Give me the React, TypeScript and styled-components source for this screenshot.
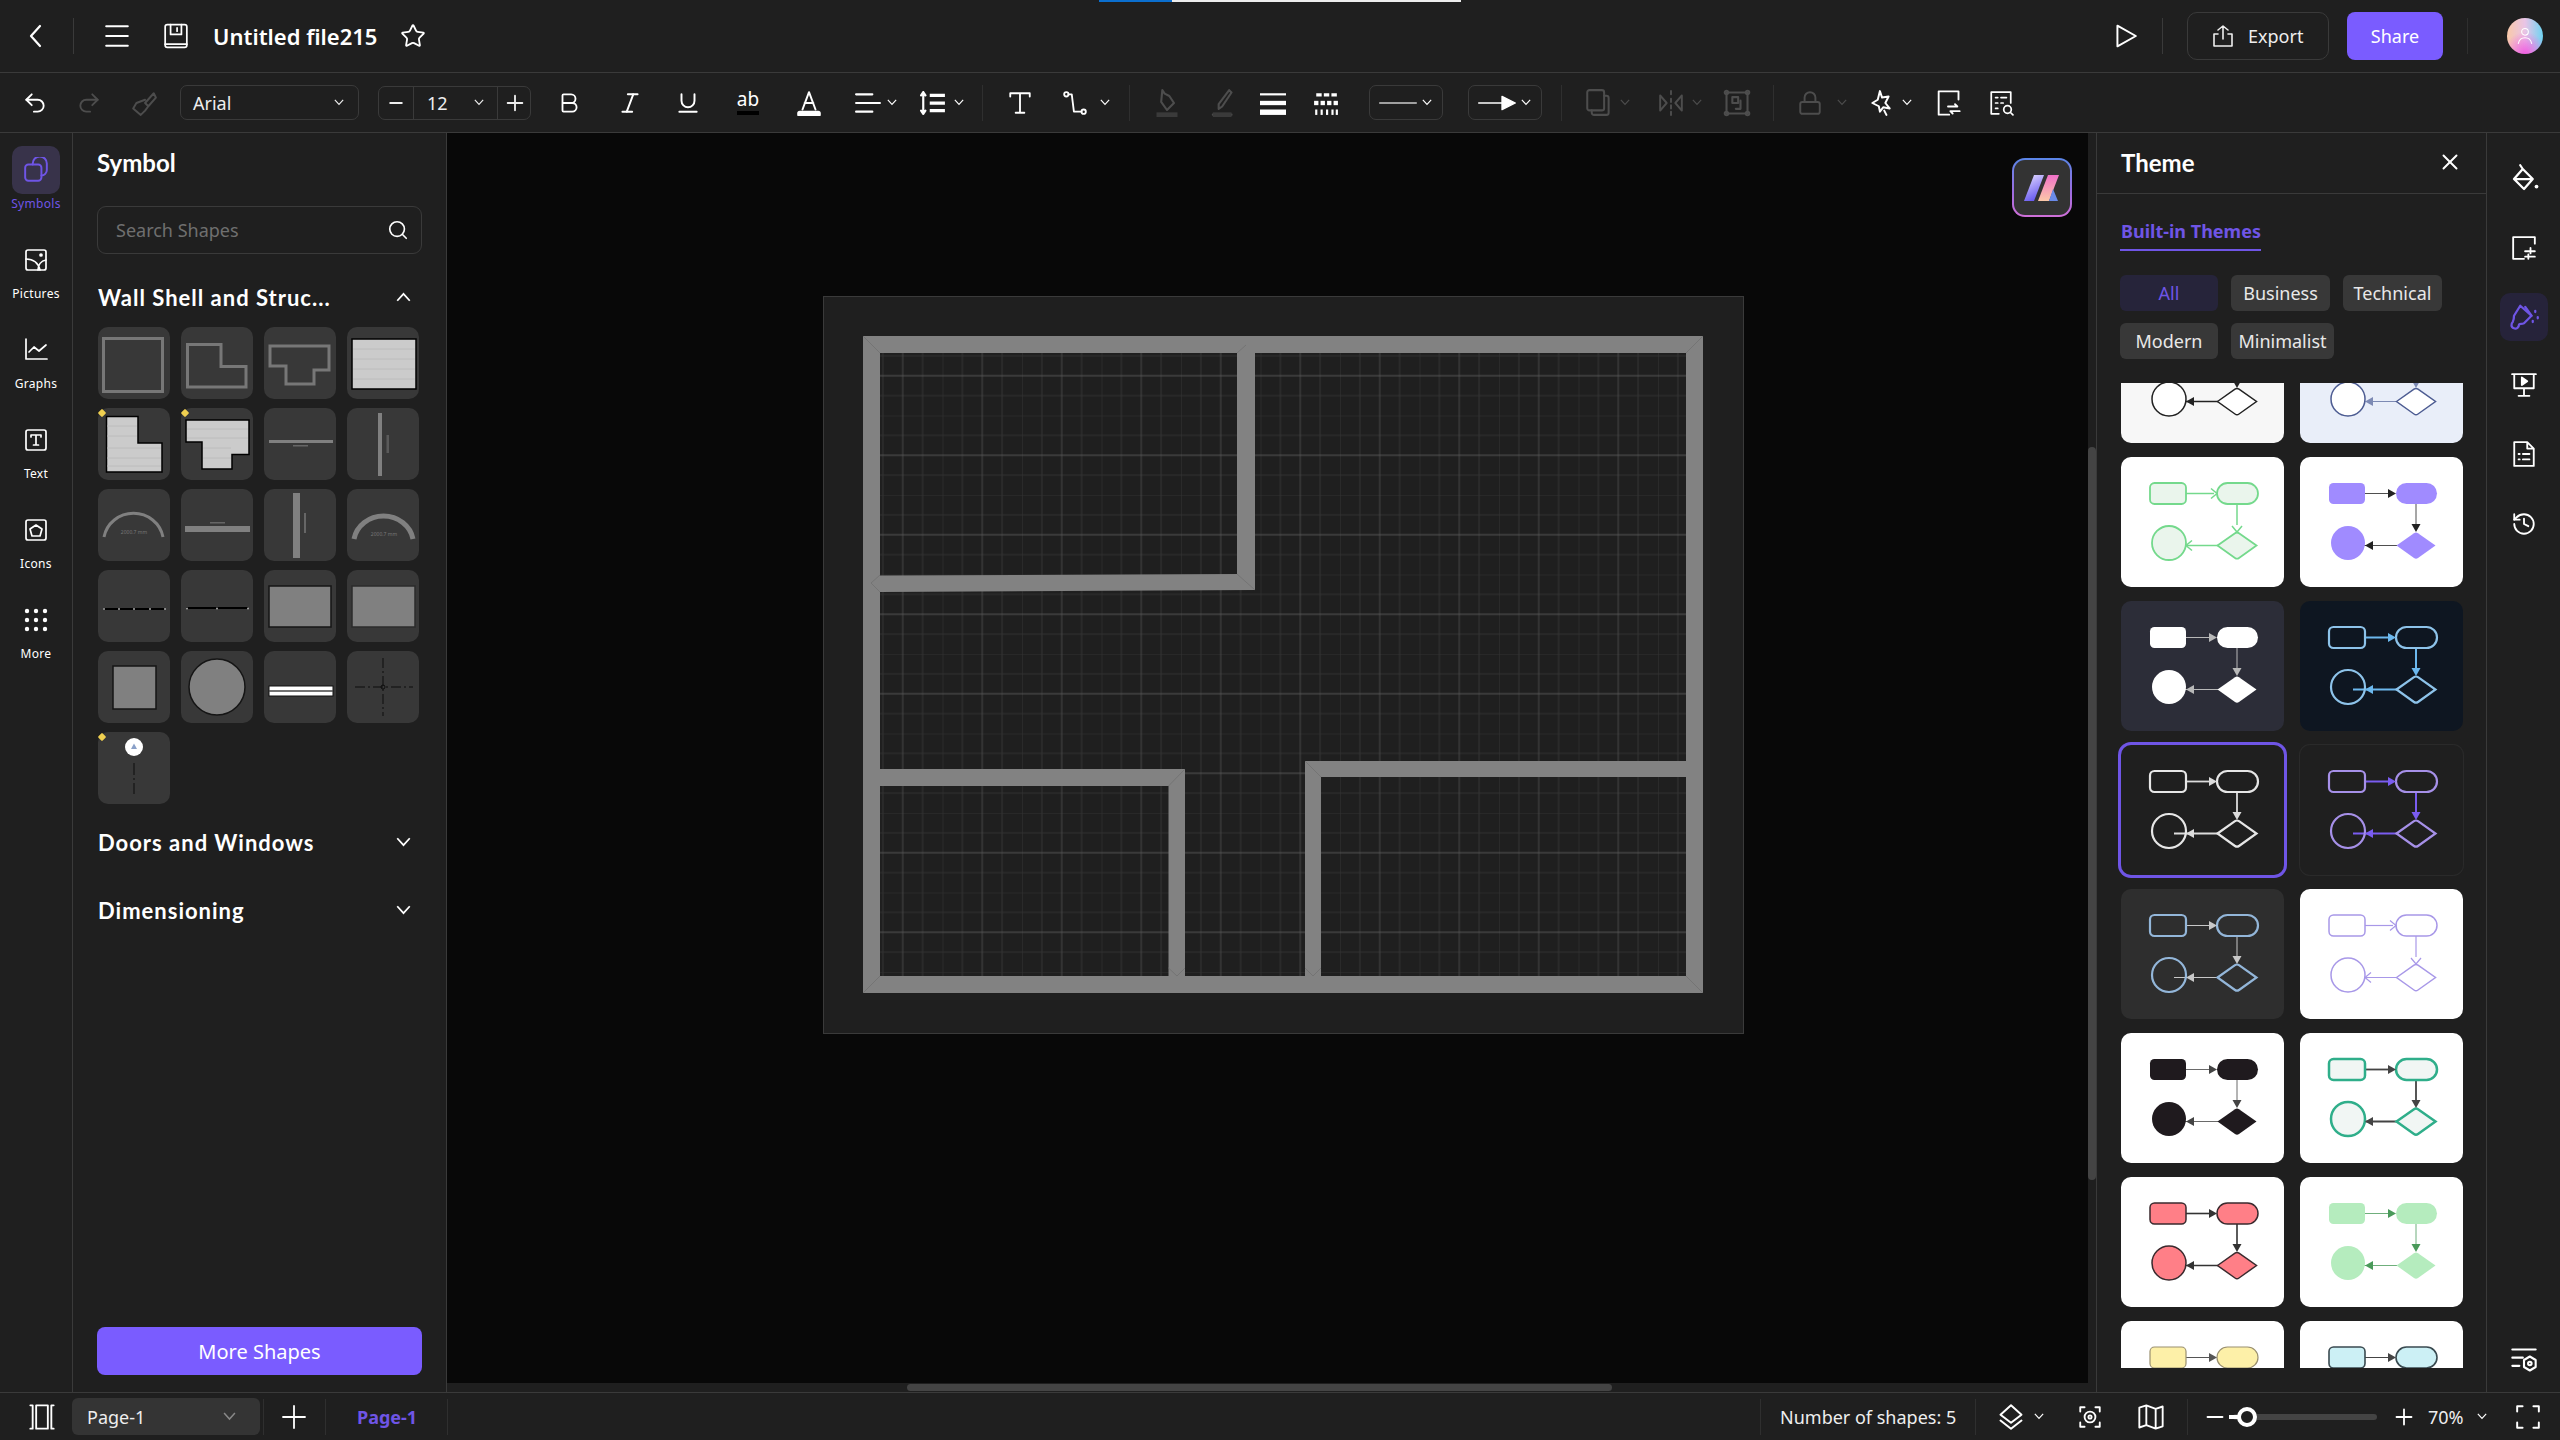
import React from 'react';
import styled, { createGlobalStyle } from 'styled-components';
import { Bold, History, Italic, Lock, Redo2, Search, Star, Underline, Undo2, X } from 'lucide-react';

const GlobalStyle = createGlobalStyle`
  html, body { margin: 0; padding: 0; background: #1f1f1f; }
  * { box-sizing: border-box; }
  body { font-family: "Noto Sans", "Liberation Sans", sans-serif; color: #fff; }
`;

const LINE = '#3a3a3a';
const PURPLE = '#7a5cff';
const INK = '#6f55e6';

const Icon = styled.svg.attrs<{ $s?: number; $sw?: number }>((p) => ({
  viewBox: '0 0 24 24',
  fill: 'none',
  stroke: 'currentColor',
  strokeWidth: p.$sw ?? 1.8,
  strokeLinecap: 'round',
  strokeLinejoin: 'round',
}))<{ $s?: number; $sw?: number }>`
  width: ${(p) => p.$s ?? 26}px;
  height: ${(p) => p.$s ?? 26}px;
  flex: none;
  display: block;
`;

const ChevSvg = styled.svg.attrs({ viewBox: '0 0 12 8', fill: 'none', stroke: 'currentColor', strokeWidth: 1.4 })<{ $w: number }>`
  width: ${(p) => p.$w}px;
  height: ${(p) => p.$w * 0.67}px;
  flex: none;
  display: block;
`;
const Chev = ({ w = 10, up = false }: { w?: number; up?: boolean }) => (
  <ChevSvg $w={w}>
    <polyline points={up ? '1,7 6,1.5 11,7' : '1,1 6,6.5 11,1'} />
  </ChevSvg>
);

const App = styled.div`
  width: 2560px;
  height: 1440px;
  display: flex;
  flex-direction: column;
  background: #1f1f1f;
  overflow: hidden;
`;

/* ---------- title bar ---------- */
const TitleBar = styled.header`
  height: 73px;
  flex: none;
  display: flex;
  align-items: center;
  border-bottom: 1px solid ${LINE};
  position: relative;
`;
const Progress = styled.div`
  position: absolute;
  top: 0;
  left: 1099px;
  width: 362px;
  height: 2px;
  background: linear-gradient(90deg, #0b6fcf 0 73px, #ececec 73px);
`;
const BarItem = styled.div<{ $ml?: number; $w?: number }>`
  margin-left: ${(p) => p.$ml ?? 0}px;
  width: ${(p) => (p.$w ? `${p.$w}px` : 'auto')};
  flex: none;
  display: flex;
  align-items: center;
  justify-content: center;
  color: #fff;
`;
const LayerItem = styled(BarItem)`
  justify-content: space-between;
`;
const VLine = styled.div<{ $ml: number; $h?: number; $soft?: boolean }>`
  margin-left: ${(p) => p.$ml}px;
  width: 1px;
  height: ${(p) => p.$h ?? 36}px;
  flex: none;
  background: ${(p) => (p.$soft ? '#2f2f2f' : LINE)};
`;
const FileName = styled.div`
  margin-left: 24px;
  width: 164px;
  flex: none;
  font-size: 22px;
  font-weight: 600;
  white-space: nowrap;
  line-height: 28px;
`;
const ExportButton = styled.button`
  margin-left: 24px;
  width: 142px;
  height: 48px;
  flex: none;
  display: flex;
  align-items: center;
  gap: 13px;
  padding: 0 0 0 23px;
  border: 1px solid ${LINE};
  border-radius: 10px;
  background: transparent;
  color: #eee;
  font: 400 18px "Noto Sans", sans-serif;
`;
const ShareButton = styled.button`
  margin-left: 18px;
  width: 96px;
  height: 48px;
  flex: none;
  border: 0;
  border-radius: 8px;
  background: ${PURPLE};
  color: #fff;
  font: 400 18px "Noto Sans", sans-serif;
`;
const Avatar = styled.div`
  margin-left: 39px;
  width: 36px;
  height: 36px;
  flex: none;
  border-radius: 50%;
  display: flex;
  align-items: center;
  justify-content: center;
  color: #fff;
  background: radial-gradient(circle at 50% 100%, #f05ee0 0, transparent 55%), linear-gradient(90deg, #f9c9a8 0%, #e9c4e6 50%, #6fd4f2 100%);
`;

/* ---------- toolbar ---------- */
const ToolBar = styled.div`
  height: 60px;
  flex: none;
  display: flex;
  align-items: center;
  border-bottom: 1px solid ${LINE};
`;
const Tool = styled.div<{ $ml: number; $w: number; $dim?: boolean }>`
  margin-left: ${(p) => p.$ml}px;
  width: ${(p) => p.$w}px;
  flex: none;
  display: flex;
  align-items: center;
  justify-content: space-between;
  color: ${(p) => (p.$dim ? '#4d4d4d' : '#fff')};
`;
const FontSelect = styled.div`
  margin-left: 23px;
  width: 179px;
  height: 35px;
  flex: none;
  display: flex;
  align-items: center;
  justify-content: space-between;
  padding: 0 14px 0 12px;
  border: 1px solid ${LINE};
  border-radius: 7px;
  font-size: 18px;
  color: #eee;
`;
const SizeGroup = styled.div`
  margin-left: 19px;
  width: 153px;
  height: 34px;
  flex: none;
  display: grid;
  grid-template-columns: 34px 85px 34px;
  border: 1px solid ${LINE};
  border-radius: 7px;
`;
const SizeCell = styled.div<{ $mid?: boolean }>`
  display: flex;
  align-items: center;
  justify-content: ${(p) => (p.$mid ? 'space-between' : 'center')};
  padding: ${(p) => (p.$mid ? '0 13px 0 13px' : '0')};
  border-left: ${(p) => (p.$mid ? `1px solid ${LINE}` : '0')};
  border-right: ${(p) => (p.$mid ? `1px solid ${LINE}` : '0')};
  font-size: 18px;
  color: #eee;
`;
const StrikeText = styled.div`
  width: 26px;
  height: 32px;
  display: flex;
  flex-direction: column;
  align-items: center;
  font-size: 19px;
  line-height: 24px;
  color: #fff;
  &::after {
    content: '';
    width: 22px;
    height: 4px;
    background: #000;
  }
`;
const LineBox = styled.div<{ $ml: number }>`
  margin-left: ${(p) => p.$ml}px;
  width: 74px;
  height: 35px;
  flex: none;
  display: flex;
  align-items: center;
  justify-content: space-between;
  padding: 0 10px 0 8px;
  border: 1px solid ${LINE};
  border-radius: 7px;
  color: #fff;
`;

/* ---------- main ---------- */
const Main = styled.main`
  flex: 1;
  min-height: 0;
  display: flex;
`;
const Rail = styled.nav<{ $right?: boolean }>`
  width: 73px;
  flex: none;
  display: flex;
  flex-direction: column;
  align-items: center;
  border-right: ${(p) => (p.$right ? '0' : `1px solid ${LINE}`)};
  padding-top: ${(p) => (p.$right ? '22px' : '13px')};
`;
const RailItem = styled.div<{ $active?: boolean }>`
  width: 72px;
  height: 90px;
  flex: none;
  display: flex;
  flex-direction: column;
  align-items: center;
  color: ${(p) => (p.$active ? INK : '#fff')};
  font-size: 12px;
  letter-spacing: 0.3px;
`;
const RailIcon = styled.div<{ $active?: boolean }>`
  width: 48px;
  height: 48px;
  border-radius: 10px;
  display: flex;
  align-items: center;
  justify-content: center;
  margin-bottom: 2px;
  background: ${(p) => (p.$active ? '#38334a' : 'transparent')};
`;
const RailLabel = styled.div`
  line-height: 16px;
  color: inherit;
`;
const SideButton = styled.div<{ $active?: boolean; $mt: number }>`
  margin-top: ${(p) => p.$mt}px;
  width: 48px;
  height: 48px;
  border-radius: 10px;
  flex: none;
  display: flex;
  align-items: center;
  justify-content: center;
  color: ${(p) => (p.$active ? INK : '#fff')};
  background: ${(p) => (p.$active ? '#26233a' : 'transparent')};
`;

const ShapePanel = styled.aside`
  width: 374px;
  flex: none;
  display: flex;
  flex-direction: column;
  padding: 0 24px;
  border-right: 1px solid ${LINE};
`;
const PanelTitle = styled.div`
  height: 58px;
  flex: none;
  display: flex;
  align-items: center;
  font-family: Lato, "Noto Sans", sans-serif;
  font-size: 24px;
  font-weight: 700;
`;
const SearchBox = styled.div`
  margin-top: 15px;
  height: 48px;
  flex: none;
  display: flex;
  align-items: center;
  justify-content: space-between;
  padding: 0 12px 0 18px;
  border: 1px solid ${LINE};
  border-radius: 9px;
  font-size: 18px;
  color: #6f6f6f;
`;
const SectionHead = styled.div<{ $mt: number }>`
  margin-top: ${(p) => p.$mt}px;
  height: 44px;
  flex: none;
  display: flex;
  align-items: center;
  justify-content: space-between;
  padding: 0 11px 0 1px;
  font-family: Lato, "Noto Sans", sans-serif;
  font-size: 22px;
  font-weight: 700;
  letter-spacing: 1px;
`;
const ShapeGrid = styled.div`
  margin-top: 8px;
  padding-left: 1px;
  display: grid;
  grid-template-columns: repeat(4, 72px);
  grid-auto-rows: 72px;
  column-gap: 11px;
  row-gap: 9px;
`;
const ShapeCell = styled.div`
  position: relative;
  background: #383838;
  border-radius: 10px;
`;
const ShapeArt = styled.svg.attrs({ viewBox: '0 0 72 72' })`
  width: 72px;
  height: 72px;
  display: block;
`;
const Badge = styled.span`
  position: absolute;
  left: 1px;
  top: 2px;
  width: 6px;
  height: 6px;
  background: #f0d050;
  transform: rotate(45deg);
  border-radius: 1px;
`;
const MoreButton = styled.button`
  margin-top: auto;
  margin-bottom: 17px;
  height: 48px;
  flex: none;
  border: 0;
  border-radius: 8px;
  background: ${PURPLE};
  color: #fff;
  font: 400 20px "Noto Sans", sans-serif;
`;

/* ---------- canvas ---------- */
const Canvas = styled.section`
  width: 1649px;
  flex: none;
  display: flex;
  flex-direction: column;
`;
const CanvasRow = styled.div`
  flex: 1;
  min-height: 0;
  display: flex;
`;
const Viewport = styled.div`
  flex: 1;
  position: relative;
  background: #080808;
  padding: 163px 0 0 376px;
`;
const Sheet = styled.div`
  width: 921px;
  height: 738px;
  padding: 39px;
  background: #1f1f1f;
  border: 1px solid ${LINE};
`;
const PlanSvg = styled.svg.attrs({ viewBox: '0 0 840 657' })`
  width: 840px;
  height: 657px;
  display: block;
`;
const AiBadge = styled.div`
  position: absolute;
  top: 25px;
  right: 16px;
  width: 60px;
  height: 59px;
  padding: 2px;
  border-radius: 13px;
  background: linear-gradient(180deg, #5a86e8 0%, #a06ce0 60%, #d070d8 100%);
`;
const AiInner = styled.div`
  width: 100%;
  height: 100%;
  border-radius: 11px;
  background: #333;
`;
const VTrack = styled.div`
  width: 8px;
  flex: none;
  background: #1f1f1f;
`;
const VThumb = styled.div`
  margin-top: 314px;
  height: 733px;
  background: #444;
  border-radius: 4px;
`;
const HTrack = styled.div`
  height: 9px;
  flex: none;
  background: #1f1f1f;
`;
const HThumb = styled.div`
  margin-left: 460px;
  width: 705px;
  height: 7px;
  margin-top: 1px;
  background: #444;
  border-radius: 4px;
`;

/* ---------- theme panel ---------- */
const ThemePanel = styled.aside`
  width: 391px;
  flex: none;
  display: flex;
  flex-direction: column;
  border-left: 1px solid ${LINE};
  border-right: 1px solid ${LINE};
`;
const ThemeHead = styled.div`
  height: 61px;
  flex: none;
  display: flex;
  align-items: center;
  justify-content: space-between;
  padding: 0 23px 2px 24px;
  border-bottom: 1px solid ${LINE};
  font-family: Lato, "Noto Sans", sans-serif;
  font-size: 24px;
  font-weight: 700;
`;
const TabTitle = styled.div`
  margin: 21px 0 0 23px;
  width: 141px;
  height: 36px;
  flex: none;
  border-bottom: 2px solid ${INK};
  color: ${INK};
  font-size: 18px;
  font-weight: 700;
  line-height: 32px;
  text-indent: 1px;
  white-space: nowrap;
`;
const ChipRow = styled.div`
  margin: 24px 0 0 23px;
  display: flex;
  flex-wrap: wrap;
  gap: 12px 13px;
  width: 340px;
`;
const Chip = styled.div<{ $w: number; $active?: boolean }>`
  width: ${(p) => p.$w}px;
  height: 36px;
  border-radius: 6px;
  display: flex;
  align-items: center;
  justify-content: center;
  font-size: 18px;
  background: ${(p) => (p.$active ? '#26243a' : '#383838')};
  color: ${(p) => (p.$active ? INK : '#e8e8e8')};
`;
const ThemeScroll = styled.div`
  flex: 1;
  min-height: 0;
  margin: 24px 0 24px 21px;
  padding: 0 3px;
  overflow: hidden;
`;
const ThemeGrid = styled.div`
  margin-top: -70px;
  display: grid;
  grid-template-columns: 163px 163px;
  grid-auto-rows: 130px;
  gap: 14px 16px;
`;
const ThemeCard = styled.div<{ $bg: string; $border?: string; $bw?: number }>`
  background: ${(p) => p.$bg};
  border-radius: 10px;
  box-shadow: ${(p) => (p.$border ? `0 0 0 ${p.$bw ?? 1}px ${p.$border}` : 'none')};
`;
const ThumbSvg = styled.svg.attrs({ viewBox: '0 0 163 130' })`
  width: 163px;
  height: 130px;
  display: block;
`;

/* ---------- status bar ---------- */
const StatusBar = styled.footer`
  height: 48px;
  flex: none;
  display: flex;
  align-items: center;
  border-top: 1px solid ${LINE};
`;
const PageSelect = styled.div`
  margin-left: 16px;
  width: 188px;
  height: 37px;
  flex: none;
  display: flex;
  align-items: center;
  justify-content: space-between;
  padding: 0 24px 0 15px;
  background: #343434;
  border-radius: 6px;
  font-size: 18px;
  color: #eee;
  svg { color: #888; }
`;
const PageTab = styled.div`
  margin-left: 31px;
  width: 60px;
  flex: none;
  font-size: 18px;
  font-weight: 700;
  color: ${INK};
  white-space: nowrap;
`;
const StatusText = styled.div<{ $ml: number; $w: number }>`
  margin-left: ${(p) => p.$ml}px;
  width: ${(p) => p.$w}px;
  flex: none;
  font-size: 18px;
  color: #eee;
  white-space: nowrap;
`;
const ZoomTrack = styled.div`
  margin-left: 11px;
  width: 144px;
  height: 6px;
  flex: none;
  position: relative;
  background: #444;
  border-radius: 3px;
`;
const ZoomThumb = styled.div`
  position: absolute;
  left: 4px;
  top: -7px;
  width: 20px;
  height: 20px;
  border-radius: 50%;
  border: 4px solid #fff;
  background: #1f1f1f;
  &::before {
    content: '';
    position: absolute;
    left: -12px;
    top: 4px;
    width: 10px;
    height: 4px;
    background: #fff;
  }
`;

/* ---------- drawings ---------- */
const G = '#808080';
function Shape({ i }: { i: number }) {
  const sheetLines = (x: number, w: number, ys: number[]) =>
    ys.map((y) => <line key={y} x1={x} x2={x + w} y1={y} y2={y} stroke="#bcbcbc" strokeWidth={1} />);
  const outline = { fill: 'none', stroke: '#777', strokeWidth: 3 };
  const solid = { fill: G, stroke: '#151515', strokeWidth: 1.5 };
  switch (i) {
    case 0: return <rect x={5.5} y={11.5} width={59} height={53} {...outline} />;
    case 1: return <path d="M6.5 17.5H40V39.5H65V60H6.5Z" {...outline} />;
    case 2: return <path d="M6 19H65V43H50V57H22V39H6Z" {...outline} />;
    case 3: return (<g><rect x={5} y={12} width={64} height={50} fill="#cbcbcb" stroke="#000" strokeWidth={1.5} />{sheetLines(6, 62, [22, 32, 42, 52])}</g>);
    case 4: return (<g><path d="M8.5 8.5H40V35H64V64H8.5Z" fill="#cbcbcb" stroke="#000" strokeWidth={1.5} />{sheetLines(9, 30, [18, 28])}{sheetLines(9, 54, [40, 50, 58])}</g>);
    case 5: return (<g><path d="M5 12H68V46.500H51V61H21V34H5Z" fill="#cbcbcb" stroke="#000" strokeWidth={1.5} />{sheetLines(6, 61, [21, 30])}{sheetLines(22, 28, [40, 50])}</g>);
    case 6: return (<g><rect x={5} y={32} width={64} height={3} fill={G} /><rect x={29} y={37} width={15} height={1.5} fill="#666" /></g>);
    case 7: return (<g><rect x={31} y={5} width={4} height={63} fill={G} /><rect x={39.5} y={27} width={2.5} height={18} fill="#5a5a5a" /></g>);
    case 8: return (<g><path d="M6 48A30 29 0 0 1 65 48" fill="none" stroke={G} strokeWidth={3} /><text x={36} y={45} fontSize={5} fill="#777" textAnchor="middle" fontFamily="Noto Sans">2000.7 mm</text></g>);
    case 9: return (<g><rect x={4} y={37} width={65} height={6} fill={G} /><rect x={29} y={33} width={15} height={1.5} fill="#666" /></g>);
    case 10: return (<g><rect x={29} y={4} width={7} height={65} fill={G} /><rect x={40} y={24} width={2} height={20} fill="#666" /></g>);
    case 11: return (<g><path d="M7 50A30 28 0 0 1 66 50" fill="none" stroke={G} strokeWidth={5} /><text x={37} y={47} fontSize={5} fill="#777" textAnchor="middle" fontFamily="Noto Sans">2000.7 mm</text></g>);
    case 12: return (<g><line x1={5} x2={67} y1={39} y2={39} stroke="#000" strokeWidth={2} />{[6, 21, 36, 52, 67].map((x) => <circle key={x} cx={x} cy={39} r={1} fill="#aaa" />)}</g>);
    case 13: return (<g><line x1={5} x2={67} y1={38} y2={38} stroke="#000" strokeWidth={2} />{[6, 36, 67].map((x) => <circle key={x} cx={x} cy={38.5} r={1} fill="#aaa" />)}</g>);
    case 14: return <rect x={5} y={16} width={62} height={41} {...solid} />;
    case 15: return <rect x={5} y={16} width={63} height={41} {...solid} stroke="#2b2b2b" />;
    case 16: return <rect x={15} y={15} width={43} height={43} {...solid} />;
    case 17: return <circle cx={36} cy={36} r={28} {...solid} />;
    case 18: return (<g><rect x={5} y={35} width={64} height={10} fill="#fff" stroke="#111" strokeWidth={1} /><line x1={5} x2={69} y1={40} y2={40} stroke="#444" strokeWidth={1.5} /></g>);
    case 19: return (<g stroke="#0d0d0d" strokeWidth={1}><line x1={8} x2={66} y1={36} y2={36} strokeDasharray="10 3 2 3" /><line x1={36} x2={36} y1={7} y2={65} strokeDasharray="10 3 2 3" /><circle cx={36} cy={36} r={2} fill="none" /></g>);
    default: return (<g><circle cx={36} cy={15} r={9} fill="#fff" /><path d="M36 11.5L39 17H33Z" fill="#8aa0c8" /><line x1={36} x2={36} y1={31} y2={62} stroke="#0d0d0d" strokeWidth={1} strokeDasharray="12 3 2 3" /></g>);
  }
}

function FloorPlan() {
  const wall = '#828282';
  const seam = '#747474';
  return (
    <PlanSvg>
      <defs>
        <pattern id="grid" width={79.5} height={79.5} patternUnits="userSpaceOnUse">
          {[0, 19.875, 59.625].map((v) => (
            <g key={v} stroke="#313131" strokeWidth={1.2}>
              <line x1={v} x2={v} y1={0} y2={79.5} />
              <line y1={v} y2={v} x1={0} x2={79.5} />
            </g>
          ))}
          <line x1={39.75} x2={39.75} y1={0} y2={79.5} stroke="#474747" strokeWidth={1} />
          <line y1={39.75} y2={39.75} x1={0} x2={79.5} stroke="#565656" strokeWidth={1} />
        </pattern>
      </defs>
      <rect x={0} y={0} width={840} height={657} fill="url(#grid)" />
      <path d="M0 0H840V657H0ZM17 17V640H823V17Z" fill={wall} fillRule="evenodd" />
      <path d="M374 8L383 17H392V254L17 256V239.500L374 238Z" fill={wall} />
      <path d="M17 433H322V640H305.500V450H17Z" fill={wall} />
      <path d="M442 425H823V441H458V640H442Z" fill={wall} />
      <g stroke={seam} strokeWidth={1} fill="none">
        <path d="M0 0L17 17M840 0L823 17M0 657L17 640M840 657L823 640" />
        <path d="M383 9L374 17M392 254L374 238M8 247L17 239M8 247L17 256" />
        <path d="M322 433L305.500 450M314 640L305.500 632M322 632L314 640" />
        <path d="M442 425L458 441M450 640L442 632M458 632L450 640" />
      </g>
    </PlanSvg>
  );
}

type ThemeSpec = {
  bg: string;
  fill: string;
  stroke: string;
  sw: number;
  arrow: string;
  aw: number;
  open?: boolean;
  border?: string;
  bw?: number;
};

const THEMES: ThemeSpec[] = [
  { bg: '#f7f7f7', fill: '#fff', stroke: '#222', sw: 1.5, arrow: '#222', aw: 1.4 },
  { bg: '#e9eef9', fill: '#fff', stroke: '#4d5c92', sw: 1.5, arrow: '#7d8ab4', aw: 1 },
  { bg: '#fff', fill: '#eaf5ec', stroke: '#74d98c', sw: 1.800, arrow: '#74d98c', aw: 1.5, open: true },
  { bg: '#fff', fill: '#a08bff', stroke: 'none', sw: 0, arrow: '#222', aw: 0.8 },
  { bg: '#2c2d38', fill: '#fff', stroke: 'none', sw: 0, arrow: '#b8b8b8', aw: 1 },
  { bg: '#0e1621', fill: 'none', stroke: '#8dc3ea', sw: 2.200, arrow: '#6cb8ee', aw: 2 },
  { bg: '#1f1f1f', fill: 'none', stroke: '#e6e6e6', sw: 2.200, arrow: '#dcdcdc', aw: 1.800, border: '#6f55e6', bw: 3 },
  { bg: '#1f1f1f', fill: 'none', stroke: '#a690e8', sw: 2.200, arrow: '#7a5cf0', aw: 2, border: '#2a2a2a', bw: 1 },
  { bg: '#2e2e2e', fill: 'none', stroke: '#93b6d9', sw: 2.200, arrow: '#c8c8c8', aw: 1 },
  { bg: '#fff', fill: '#fff', stroke: '#a898e8', sw: 1.500, arrow: '#a898e8', aw: 1.200, open: true },
  { bg: '#fff', fill: '#1f1a1e', stroke: 'none', sw: 0, arrow: '#444', aw: 0.8 },
  { bg: '#fff', fill: '#f1f6f4', stroke: '#2fae8a', sw: 2.500, arrow: '#444', aw: 1.800 },
  { bg: '#fff', fill: '#ff7f87', stroke: '#3a2a2e', sw: 1.500, arrow: '#333', aw: 1.600 },
  { bg: '#fff', fill: '#b5ecbe', stroke: 'none', sw: 0, arrow: '#4a9a5a', aw: 0.8 },
  { bg: '#fff', fill: '#fdf0a8', stroke: '#9a9070', sw: 1.200, arrow: '#555', aw: 1 },
  { bg: '#fff', fill: '#ccf0f5', stroke: '#3a4a50', sw: 1.600, arrow: '#444', aw: 1 },
];

function Head({ x, y, dir, t }: { x: number; y: number; dir: 'r' | 'd' | 'l'; t: ThemeSpec }) {
  const rot = dir === 'r' ? 0 : dir === 'd' ? 90 : 180;
  return (
    <g transform={`translate(${x} ${y}) rotate(${rot})`}>
      {t.open ? (
        <polyline points="-6,-5 0,0 -6,5" fill="none" stroke={t.arrow} strokeWidth={t.aw} />
      ) : (
        <polygon points="-8,-4.500 0,0 -8,4.500" fill={t.arrow} />
      )}
    </g>
  );
}

function ThemeThumb({ t }: { t: ThemeSpec }) {
  const s = { fill: t.fill, stroke: t.stroke, strokeWidth: t.sw };
  return (
    <ThumbSvg>
      <line x1={65} x2={93} y1={36.500} y2={36.500} stroke={t.arrow} strokeWidth={t.aw} />
      <line x1={116} x2={116} y1={47} y2={68} stroke={t.arrow} strokeWidth={t.aw} />
      <line x1={97} x2={53} y1={88.500} y2={88.500} stroke={t.arrow} strokeWidth={t.aw} />
      <rect x={29} y={26} width={36} height={21} rx={4.500} {...s} />
      <rect x={96} y={26} width={41} height={21} rx={10.500} {...s} />
      <circle cx={48} cy={86} r={17} {...s} />
      <path d="M96.500 88.500L114 76.200Q116 74.800 118 76.200L135.500 88.500L118 101Q116 102.400 114 101Z" {...s} />
      <Head x={96} y={36.500} dir="r" t={t} />
      <Head x={116} y={75} dir="d" t={t} />
      <Head x={65} y={88.500} dir="l" t={t} />
    </ThumbSvg>
  );
}

const RAIL = [
  { label: 'Pictures', draw: <><rect x={2} y={2} width={20} height={20} rx={2} /><path d="M2 11c6 0 12 3 14 11M14 22c0-5 3-9 8-10" /><circle cx={17} cy={7} r={1} fill="currentColor" /></> },
  { label: 'Graphs', draw: <><path d="M2 1v20h21" /><path d="M5 14l5-5 5 4 7-6" /></> },
  { label: 'Text', draw: <><rect x={2} y={2} width={20} height={20} rx={2} /><path d="M7 9V7h10v2M12 7v10M9.500 17h5" /></> },
  { label: 'Icons', draw: <><rect x={2} y={2} width={20} height={20} rx={2} /><path d="M12 7l6 4-2 7H8l-2-7z" /></> },
  { label: 'More', draw: <g fill="currentColor" stroke="none">{[3, 12, 21].flatMap((y) => [3, 12, 21].map((x) => <circle key={`${x}-${y}`} cx={x} cy={y} r={2.200} />))}</g> },
];

export default function Page() {
  return (
    <App>
      <GlobalStyle />
      <TitleBar>
        <Progress />
        <BarItem $ml={26} $w={20}>
          <Icon $s={24} $sw={2.2}><polyline points="16,2 7,12 16,22" /></Icon>
        </BarItem>
        <VLine $ml={27} />
        <BarItem $ml={30} $w={26}>
          <Icon $s={26} $sw={1.800}><path d="M2 3h20M2 12h20M2 21h20" /></Icon>
        </BarItem>
        <BarItem $ml={33} $w={26}>
          <Icon $s={26} $sw={1.600}><rect x={2} y={1.500} width={20} height={21} rx={2} /><path d="M7 1.500v9h10v-9M13 4.500v3M2 19.500h20" /></Icon>
        </BarItem>
        <FileName>Untitled file215</FileName>
        <BarItem $ml={22} $w={28}><Star size={26} strokeWidth={1.700} /></BarItem>
        <BarItem $ml={1686} $w={24}>
          <Icon $s={26} $sw={1.800}><path d="M5 2.500L22 12 5 21.500Z" /></Icon>
        </BarItem>
        <VLine $ml={25} />
        <ExportButton>
          <Icon $s={24} $sw={1.600}><path d="M12 15V2M7 6l5-4 5 4M7 10H3v12h18V10h-4" /></Icon>
          Export
        </ExportButton>
        <ShareButton>Share</ShareButton>
        <VLine $ml={24} $soft />
        <Avatar>
          <Icon $s={20} $sw={1.300}><circle cx={12} cy={7} r={4} /><path d="M4 21c1-5 4-7 8-7s7 2 8 7" /></Icon>
        </Avatar>
      </TitleBar>

      <ToolBar>
        <Tool $ml={22} $w={26}><Undo2 size={26} strokeWidth={1.700} /></Tool>
        <Tool $ml={28} $w={26} $dim><Redo2 size={26} strokeWidth={1.700} /></Tool>
        <Tool $ml={29} $w={26} $dim>
          <Icon><path d="M21 3l-8 9 3 3 7-8zM13 9L5 12l-3 5 7 6 4-4 3-4" /></Icon>
        </Tool>
        <FontSelect>Arial<Chev /></FontSelect>
        <SizeGroup>
          <SizeCell><Icon $s={20} $sw={2.200}><path d="M5 12h14" /></Icon></SizeCell>
          <SizeCell $mid>12<Chev /></SizeCell>
          <SizeCell><Icon $s={22} $sw={2}><path d="M4 12h16M12 4v16" /></Icon></SizeCell>
        </SizeGroup>
        <Tool $ml={25} $w={26}><Bold size={28} strokeWidth={1.700} /></Tool>
        <Tool $ml={35} $w={26}><Italic size={26} strokeWidth={1.800} /></Tool>
        <Tool $ml={32} $w={26}><Underline size={26} strokeWidth={1.800} /></Tool>
        <Tool $ml={34} $w={26}><StrikeText>ab</StrikeText></Tool>
        <Tool $ml={35} $w={26}>
          <Icon><path d="M6 18L12 2l6 16M8 12h8" /><rect x={2} y={20} width={20} height={4} rx={1.500} fill="currentColor" /></Icon>
        </Tool>
        <Tool $ml={33} $w={42}>
          <Icon $sw={2}><path d="M1 4h15M1 12h22M1 20h15" /></Icon><Chev />
        </Tool>
        <Tool $ml={23} $w={44}>
          <Icon $sw={2}><path d="M3 2v20M1 5l2-3 2 3M1 19l2 3 2-3" /><path d="M9 5h14M9 12h14M9 19h14" strokeWidth={3} strokeLinecap="butt" /></Icon><Chev />
        </Tool>
        <VLine $ml={18} $soft />
        <Tool $ml={24} $w={26}>
          <Icon $sw={1.700}><path d="M3 6V3h18v3M12 3v18M8 21h8" /></Icon>
        </Tool>
        <Tool $ml={29} $w={48}>
          <Icon $sw={1.700}><circle cx={4} cy={4} r={2} /><path d="M6 4h3l2 16h7" /><circle cx={20} cy={20} r={2} /></Icon><Chev />
        </Tool>
        <VLine $ml={19} $soft />
        <Tool $ml={23} $w={26} $dim>
          <Icon $s={28}><path d="M8 1l2 3 4 2 4 6-6 6-5-7z" /><path d="M3 22h18" strokeWidth={4} strokeLinecap="butt" stroke="#3a3a3a" /></Icon>
        </Tool>
        <Tool $ml={28} $w={26} $dim>
          <Icon $s={28}><path d="M19 1l2 2-8 12-3 2 0-4zM5 22h16" strokeWidth={1.800} /><path d="M5 22h16" strokeWidth={4} strokeLinecap="butt" stroke="#3a3a3a" /></Icon>
        </Tool>
        <Tool $ml={27} $w={26}>
          <Icon $sw={0}><g fill="currentColor" stroke="none"><rect y={3} width={24} height={2} /><rect y={10} width={24} height={4} /><rect y={18} width={24} height={5} /></g></Icon>
        </Tool>
        <Tool $ml={27} $w={26}>
          <Icon $sw={0}><g fill="currentColor" stroke="none">
            {[3, 10, 17].map((x) => <rect key={x} x={x} y={3} width={5} height={3} />)}
            {[1, 7, 13, 19].map((x) => <rect key={x} x={x} y={10} width={4} height={4} />)}
            {[2, 7, 12, 17, 21].map((x) => <rect key={x} x={x} y={18} width={2} height={5} />)}
          </g></Icon>
        </Tool>
        <LineBox $ml={30}>
          <Icon $s={40} $sw={0.800}><path d="M1 12h22" stroke="#ccc" /></Icon><Chev />
        </LineBox>
        <LineBox $ml={25}>
          <Icon $s={40} $sw={0.800}><path d="M1 12h15" /><path d="M15 8l8 4-8 4z" fill="currentColor" /></Icon><Chev />
        </LineBox>
        <VLine $ml={19} $soft />
        <Tool $ml={23} $w={45} $dim>
          <Icon $s={27}><rect x={2} y={1} width={15} height={18} rx={2} /><path d="M17 6h2a2 2 0 0 1 2 2v13a2 2 0 0 1-2 2H8a2 2 0 0 1-2-2v-2" /></Icon><Chev />
        </Tool>
        <Tool $ml={28} $w={44} $dim>
          <Icon><path d="M12 1v3M12 8v3M12 14v3M12 20v3M2 5l6 7-6 7zM22 5l-6 7 6 7z" /></Icon><Chev />
        </Tool>
        <Tool $ml={21} $w={28} $dim>
          <Icon $s={28}><rect x={3} y={3} width={18} height={18} rx={1} /><rect x={8} y={7} width={5} height={5} /><path d="M15 10v7h-4" /><circle cx={3} cy={3} r={1.500} /><circle cx={21} cy={3} r={1.500} /><circle cx={3} cy={21} r={1.500} /><circle cx={21} cy={21} r={1.500} /></Icon>
        </Tool>
        <VLine $ml={22} $soft />
        <Tool $ml={23} $w={50} $dim>
          <Lock size={26} strokeWidth={1.800} /><Chev />
        </Tool>
        <Tool $ml={21} $w={44}>
          <Icon $s={26}><path d="M11 1l2 6 6-1-3 6 4 5-6-1-3 4-1-5-6-3 5-3zM15 19l2 4" /></Icon><Chev />
        </Tool>
        <Tool $ml={22} $w={28}>
          <Icon $s={28} $sw={1.600}><path d="M21 9V2H4v20h9M4 2h17" /><path d="M12 15h8l-2-2M22 19h-8l2 2" /></Icon>
        </Tool>
        <Tool $ml={26} $w={26}>
          <Icon $sw={1.600}><path d="M10 22H3V2h18v10" /><path d="M7 7h2M12 7h5M7 12h2M12 12h2M7 17h2" /><circle cx={18} cy={18} r={3.500} /><path d="M21 21l2 2" /></Icon>
        </Tool>
      </ToolBar>

      <Main>
        <Rail>
          <RailItem $active>
            <RailIcon $active>
              <Icon $s={26} $sw={1.800}><rect x={2} y={7} width={15} height={15} rx={3} /><path d="M9 7V6a5 5 0 0 1 13 0v6a5 5 0 0 1-5 5" /></Icon>
            </RailIcon>
            <RailLabel>Symbols</RailLabel>
          </RailItem>
          {RAIL.map((r) => (
            <RailItem key={r.label}>
              <RailIcon><Icon $s={24} $sw={1.700}>{r.draw}</Icon></RailIcon>
              <RailLabel>{r.label}</RailLabel>
            </RailItem>
          ))}
        </Rail>

        <ShapePanel>
          <PanelTitle>Symbol</PanelTitle>
          <SearchBox>Search Shapes<Search size={22} color="#fff" strokeWidth={1.800} /></SearchBox>
          <SectionHead $mt={21}>Wall Shell and Struc...<Chev w={15} up /></SectionHead>
          <ShapeGrid>
            {Array.from({ length: 21 }, (_, i) => (
              <ShapeCell key={i}>
                <ShapeArt><Shape i={i} /></ShapeArt>
                {(i === 4 || i === 5 || i === 20) && <Badge />}
              </ShapeCell>
            ))}
          </ShapeGrid>
          <SectionHead $mt={16}>Doors and Windows<Chev w={15} /></SectionHead>
          <SectionHead $mt={24}>Dimensioning<Chev w={15} /></SectionHead>
          <MoreButton>More Shapes</MoreButton>
        </ShapePanel>

        <Canvas>
          <CanvasRow>
            <Viewport>
              <Sheet><FloorPlan /></Sheet>
              <AiBadge>
                <AiInner>
                  <svg width={56} height={55} viewBox="0 0 56 55">
                    <defs>
                      <linearGradient id="ai1" x1="0" y1="0" x2="0.4" y2="1"><stop offset="0" stopColor="#e8e0ff" /><stop offset="1" stopColor="#6a5cf0" /></linearGradient>
                      <linearGradient id="ai2" x1="0" y1="0" x2="0" y2="1"><stop offset="0" stopColor="#f070c8" /><stop offset="1" stopColor="#fbc8a8" /></linearGradient>
                    </defs>
                    <polygon points="10,41 20,15 30,15 20,41" fill="url(#ai1)" />
                    <polygon points="24,41 34,15 45,15 35,41" fill="url(#ai2)" />
                    <polygon points="35,41 39,29 44,41" fill="#6a8ae8" />
                  </svg>
                </AiInner>
              </AiBadge>
            </Viewport>
            <VTrack><VThumb /></VTrack>
          </CanvasRow>
          <HTrack><HThumb /></HTrack>
        </Canvas>

        <ThemePanel>
          <ThemeHead>Theme<X size={26} strokeWidth={1.800} /></ThemeHead>
          <TabTitle>Built-in Themes</TabTitle>
          <ChipRow>
            <Chip $w={98} $active>All</Chip>
            <Chip $w={99}>Business</Chip>
            <Chip $w={99}>Technical</Chip>
            <Chip $w={98}>Modern</Chip>
            <Chip $w={103}>Minimalist</Chip>
          </ChipRow>
          <ThemeScroll>
            <ThemeGrid>
              {THEMES.map((t, i) => (
                <ThemeCard key={i} $bg={t.bg} $border={t.border} $bw={t.bw}>
                  <ThemeThumb t={t} />
                </ThemeCard>
              ))}
            </ThemeGrid>
          </ThemeScroll>
        </ThemePanel>

        <Rail $right>
          <SideButton $mt={0}>
            <Icon $s={30} $sw={1.800}><path d="M9 1l2 3M11 4l8 8-7 8-8-8zM4 12h15" /><circle cx={22} cy={18} r={1.500} fill="currentColor" stroke="none" /></Icon>
          </SideButton>
          <SideButton $mt={21}>
            <Icon $s={26} $sw={1.700}><path d="M22 8V2H2v20h10M2 2h20" /><path d="M13 15h9M13 20h9M18 12v5M16 18v4" /></Icon>
          </SideButton>
          <SideButton $mt={21} $active>
            <Icon $s={30} $sw={1.800}><path d="M9 3l9 8-6 6c-2 1-3 0-4 1 0 2-2 4-4 3-3-1-2-4-1-5 1-2 1-3 1-5z" /><path d="M13 4l5 7M21 7v1M23 12v1M19 15v1" /></Icon>
          </SideButton>
          <SideButton $mt={20}>
            <Icon $s={26} $sw={1.700}><path d="M1 2h22M3 2v13h18V2M12 15v7M7 22h10" /><path d="M10 5l5 3.500-5 3.500z" fill="currentColor" /></Icon>
          </SideButton>
          <SideButton $mt={21}>
            <Icon $s={26} $sw={1.700}><path d="M15 1H3v22h18V7zM15 1v6h6" /><path d="M7 12h1M11 12h6M7 17h1M11 17h6" /></Icon>
          </SideButton>
          <SideButton $mt={22}>
            <History size={26} strokeWidth={1.700} />
          </SideButton>
          <SideButton $mt={788}>
            <Icon $s={28} $sw={1.800}><path d="M2 3h20M2 10h9M2 17h6" /><path d="M17 9l5 3v6l-5 3-5-3v-6z" /><circle cx={17} cy={15} r={1.500} /></Icon>
          </SideButton>
        </Rail>
      </Main>

      <StatusBar>
        <BarItem $ml={28} $w={28}>
          <Icon $s={28} $sw={1.600}><rect x={7} y={2} width={10} height={20} /><path d="M2 2h2v20H2M22 2h-2v20h2" /></Icon>
        </BarItem>
        <PageSelect>Page-1<Chev w={13} /></PageSelect>
        <VLine $ml={3} $soft />
        <BarItem $ml={19} $w={22}>
          <Icon $s={24} $sw={1.800}><path d="M1 12h22M12 1v22" /></Icon>
        </BarItem>
        <VLine $ml={20} $soft />
        <PageTab>Page-1</PageTab>
        <VLine $ml={30} $soft />
        <VLine $ml={1312} $soft />
        <StatusText $ml={19} $w={176}>Number of shapes: 5</StatusText>
        <VLine $ml={19} $soft />
        <LayerItem $ml={21} $w={47}>
          <Icon $s={28} $sw={1.700}><path d="M12 2l9 8-9 7-9-7zM3 15l9 7 9-7" /></Icon>
          <Chev />
        </LayerItem>
        <BarItem $ml={34} $w={24}>
          <Icon $s={26} $sw={1.700}><path d="M3 7V3h4M17 3h4v4M3 17v4h4M17 21h4v-4" /><circle cx={12} cy={12} r={5} /><circle cx={12} cy={12} r={1.500} /></Icon>
        </BarItem>
        <BarItem $ml={35} $w={27}>
          <Icon $s={28} $sw={1.600}><path d="M2 4l6 -2 8 3 6-2v17l-6 2-8-3-6 2zM8 2v17M16 5v17" /></Icon>
        </BarItem>
        <VLine $ml={23} $soft />
        <BarItem $ml={19} $w={15}>
          <Icon $s={18} $sw={2.400}><path d="M2 12h20" /></Icon>
        </BarItem>
        <ZoomTrack><ZoomThumb /></ZoomTrack>
        <BarItem $ml={19} $w={15}>
          <Icon $s={18} $sw={2.400}><path d="M2 12h20M12 2v20" /></Icon>
        </BarItem>
        <StatusText $ml={17} $w={40}>70%</StatusText>
        <BarItem $ml={8} $w={12}><Chev /></BarItem>
        <BarItem $ml={28} $w={24}>
          <Icon $s={26} $sw={1.800}><path d="M2 7V2h5M17 2h5v5M2 17v5h5M17 22h5v-5" /></Icon>
        </BarItem>
      </StatusBar>
    </App>
  );
}
